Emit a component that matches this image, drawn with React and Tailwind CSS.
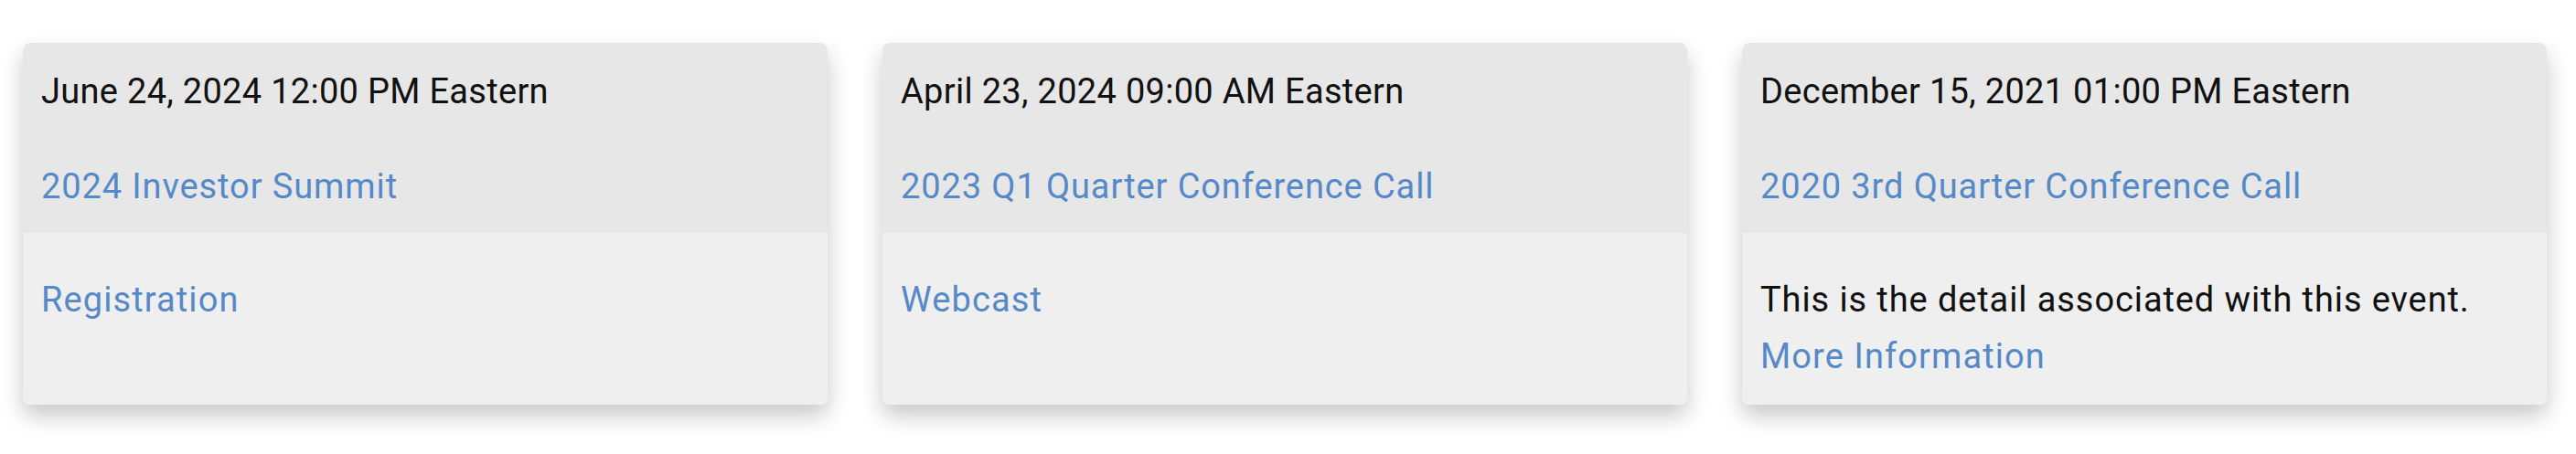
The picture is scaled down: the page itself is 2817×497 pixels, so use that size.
import React from "react";

const events = [
  {
    date: "June 24, 2024 12:00 PM Eastern",
    title: "2024 Investor Summit",
    body: [{ type: "link", text: "Registration" }],
  },
  {
    date: "April 23, 2024 09:00 AM Eastern",
    title: "2023 Q1 Quarter Conference Call",
    body: [{ type: "link", text: "Webcast" }],
  },
  {
    date: "December 15, 2021 01:00 PM Eastern",
    title: "2020 3rd Quarter Conference Call",
    body: [
      { type: "text", text: "This is the detail associated with this event." },
      { type: "link", text: "More Information" },
    ],
  },
];

function Card({ ev }) {
  return (
    <div className="w-[880px] rounded-[8px] overflow-hidden flex flex-col shadow-[0_12px_24px_rgba(0,0,0,0.22)]">
      <div className="bg-[#e7e7e7] px-[20px] pt-[22px] pb-[20px]">
        <p className="text-[#111111] text-[38px] leading-[62px] tracking-[0.3px]">{ev.date}</p>
        <p className="mt-[42px] text-[38px] leading-[62px] tracking-[0.9px]">
          <a className="text-[#5689c8]" href="#">{ev.title}</a>
        </p>
      </div>
      <div className="flex-1 bg-[#efefef] px-[20px] pt-[42px] pb-[22px]">
        {ev.body.map((b, i) =>
          b.type === "link" ? (
            <p key={i} className="text-[38px] leading-[62px] tracking-[1.1px]">
              <a className="text-[#5689c8]" href="#">{b.text}</a>
            </p>
          ) : (
            <p key={i} className="text-[#111111] text-[38px] leading-[62px] tracking-[0.9px]">{b.text}</p>
          )
        )}
      </div>
    </div>
  );
}

export default function App() {
  return (
    <div className="w-[2817px] h-[497px] bg-white pt-[47px] pl-[25px] font-['Roboto',sans-serif]">
      <div className="flex items-stretch gap-[60px]">
        {events.map((ev, i) => (
          <Card key={i} ev={ev} />
        ))}
      </div>
    </div>
  );
}
